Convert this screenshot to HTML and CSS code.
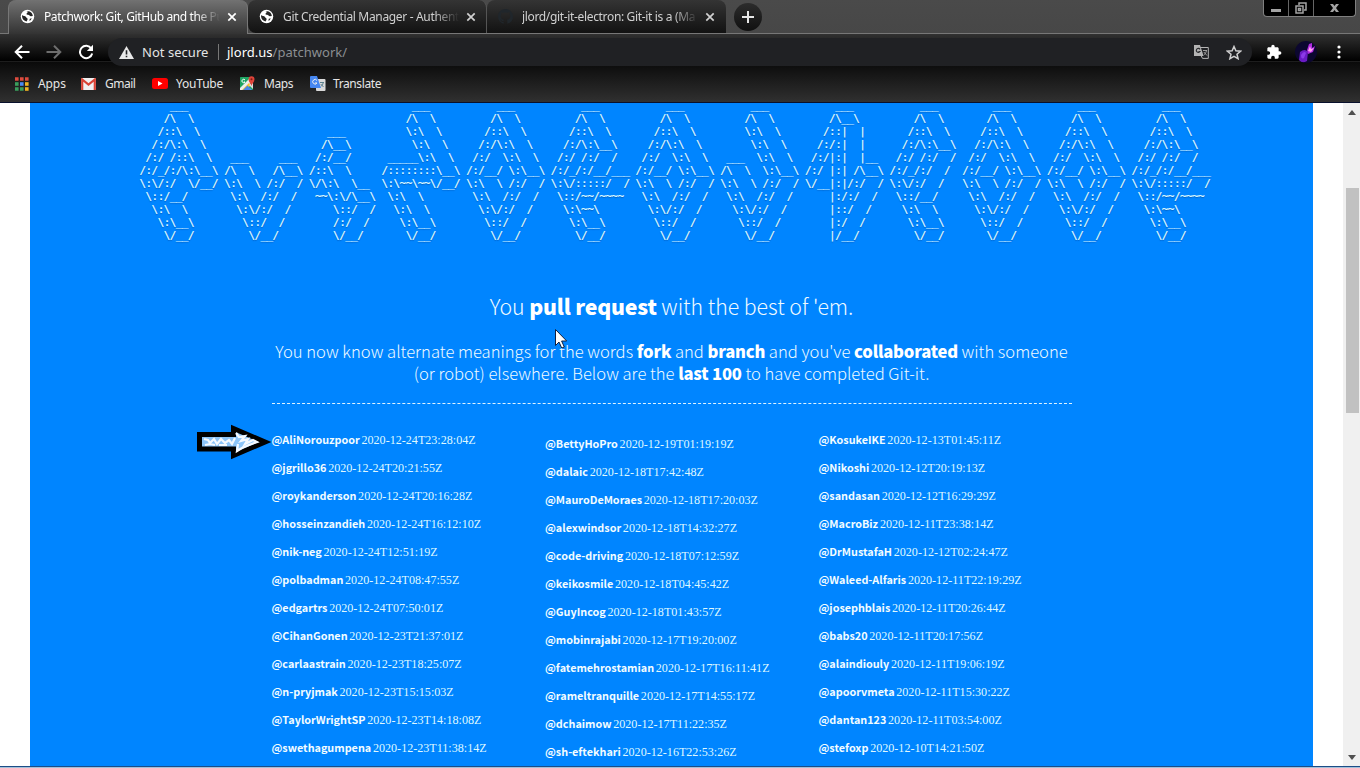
FILE: index.html
```
<!DOCTYPE html>
<html lang="en">
<head>
<meta charset="utf-8">
<title>Patchwork: Git, GitHub and the Pull Request</title>
<link rel="stylesheet" href="styles.css">
</head>
<body>
<svg width="0" height="0" class="defs">
  <symbol id="globe" viewBox="0 0 16 16"><circle cx="8" cy="8" r="7.2" fill="#fff"/><path d="M2.2 6.5C3.500 7.800 5.600 7.200 6.400 8.600 7 10 8.400 9.600 8.100 11.200L7 13.200C4.300 12.800 2.300 10.600 2.200 8zM6 2.700C7.800 2.300 8.600 3 7.700 4.200 6.400 4.800 6.700 6.300 8.400 6.100 10 6 10.400 7.600 11.600 7.800L13.700 7.400C13.500 5 11.900 2.800 9.600 2.300M10.500 10.300L12.600 9.800 11.300 11.900 9.900 12.600z" fill="#252525"/></symbol>
  <symbol id="close" viewBox="0 0 10 10"><path d="M1.300 1.300L8.700 8.700M8.700 1.300L1.300 8.700" stroke="currentColor" stroke-width="1.700"/></symbol>
</svg>
<header class="chrome">
  <div class="tabs">
    <div class="tab active"><svg class="fav"><use href="#globe"/></svg><span class="title t1">Patchwork: Git, GitHub and the Pu</span><svg class="x"><use href="#close"/></svg></div>
    <div class="tab second"><svg class="fav"><use href="#globe"/></svg><span class="title t2">Git Credential Manager - Authenti</span><svg class="x"><use href="#close"/></svg></div>
    <div class="tab third"><svg class="fav" viewBox="0 0 16 16"><path fill="#20262b" d="M8 0C3.580 0 0 3.580 0 8c0 3.540 2.290 6.530 5.470 7.590.4.070.55-.17.55-.38v-1.500c-2.230.5-2.700-.94-2.700-.94-.36-.92-.89-1.170-.89-1.170-.73-.5.05-.49.05-.49.8.06 1.230.83 1.230.83.7 1.220 1.870.87 2.330.66.07-.52.28-.87.5-1.070-1.780-.2-3.640-.89-3.640-3.950 0-.87.31-1.590.82-2.150-.1-.2-.36-1.020.08-2.120 0 0 .67-.21 2.200.82a7.600 7.600 0 0 1 4 0c1.530-1.040 2.200-.82 2.200-.82.44 1.100.16 1.920.08 2.120.51.56.82 1.270.82 2.150 0 3.070-1.870 3.750-3.650 3.950.29.25.54.73.54 1.480v2.200c0 .21.15.46.55.38A8 8 0 0 0 16 8c0-4.420-3.580-8-8-8z"/></svg><span class="title t3">jlord/git-it-electron: Git-it is a (Ma</span><svg class="x"><use href="#close"/></svg></div>
    <div class="newtab"><svg width="12" height="12" viewBox="0 0 12 12"><path d="M6 0V12M0 6H12" stroke="#e6e6e6" stroke-width="2"/></svg></div>
    <div class="winctl">
      <span class="wmin"><i></i></span>
      <span class="wmax"><svg width="12" height="12" viewBox="0 0 12 12"><path d="M4 3V1H11V8H9M1 4H8V11H1zM3.500 6.500H5.500V8.500H3.500z" fill="none" stroke="#a4a4a4" stroke-width="1.500"/></svg></span>
      <span class="wclose"><svg width="9" height="8" viewBox="0 0 9 8"><path d="M0 0H3L4.500 2 6 0H9L6 4 9 8H6L4.500 6 3 8H0L3 4z" fill="#a4a4a4"/></svg></span>
    </div>
  </div>
  <div class="toolbar">
    <svg class="nav" viewBox="0 0 16 16"><path d="M15.500 8H2M8 1.700L1.700 8 8 14.300" fill="none" stroke="#fff" stroke-width="2"/></svg>
    <svg class="nav" viewBox="0 0 16 16"><path d="M.5 8H14M8 1.700L14.300 8 8 14.300" fill="none" stroke="#6e6e6e" stroke-width="2"/></svg>
    <svg class="nav" viewBox="0 0 16 16"><path d="M13.300 4.500A6.200 6.200 0 1 0 14.200 9.500" fill="none" stroke="#fff" stroke-width="2"/><path d="M15 .8V7H8.800z" fill="#fff"/></svg>
    <div class="omni">
      <svg width="15" height="13" viewBox="0 0 15 13"><path d="M7.500 0L15 13H0z" fill="#e8e8e8"/><path d="M7.500 4.300V8.500M7.500 9.700V11.300" stroke="#202124" stroke-width="1.600"/></svg>
      <span class="ns">Not secure</span><i class="bar"></i><span class="url">jlord.us<b>/patchwork/</b></span>
      <svg class="gtr" width="15" height="14" viewBox="0 0 15 14"><path d="M6 2.500H14.300V13.400H8.500L7.300 11" fill="none" stroke="#b4b4b4"/><path d="M0 0H6L9.600 11H0z" fill="#b4b4b4"/><path d="M6 4.300A2 2 0 1 0 6 6.500H4.500" stroke="#2b2c2f" stroke-width="1.200" fill="none"/><path d="M9 5.500H13M12.500 5.500C12 8 11 9 9.800 10M9.800 7L13 10.500" stroke="#aaa" fill="none" stroke-width=".9"/></svg>
      <svg class="star" width="16" height="15" viewBox="0 0 16 15"><path d="M8 1.500L9.900 5.700 14.500 6.200 11 9.200 12.100 13.700 8 11.300 3.900 13.700 5 9.200 1.500 6.200 6.100 5.700z" fill="none" stroke="#d0d0d0" stroke-width="1.500"/></svg>
    </div>
    <svg class="puz" viewBox="0 0 24 24"><path fill="#fff" d="M20.500 11H19V7c0-1.100-.9-2-2-2h-4V3.500C13 2.120 11.880 1 10.500 1S8 2.120 8 3.500V5H4c-1.100 0-1.990.9-1.990 2v3.800H3.500c1.490 0 2.700 1.210 2.700 2.700s-1.210 2.700-2.700 2.700H2V20c0 1.100.9 2 2 2h3.800v-1.500c0-1.490 1.210-2.700 2.700-2.700s2.700 1.210 2.700 2.700V22H17c1.100 0 2-.9 2-2v-4h1.500c1.380 0 2.500-1.120 2.500-2.500S21.880 11 20.500 11z"/></svg>
    <svg class="ava" viewBox="0 0 22 22"><defs><clipPath id="ac"><circle cx="11" cy="11" r="11"/></clipPath></defs><g clip-path="url(#ac)"><rect width="22" height="22" fill="#0c0730"/><path d="M5 11Q10 7 13 11L12 20Q7 23 4 19z" fill="#6a1bc4"/><path d="M12 9L14 3 17 2 17 7 20 5 18 11 13 13z" fill="#b02be0"/><path d="M13 10L15 5 16 8 19 7 16 11z" fill="#ffa0f0"/><path d="M6 14Q9 9 11 12L9 17Q6 19 6 14" fill="#8b3ae8"/></g></svg>
    <svg class="dots" width="4" height="14" viewBox="0 0 4 14"><g fill="#fff"><circle cx="2" cy="2" r="1.600"/><circle cx="2" cy="7" r="1.600"/><circle cx="2" cy="12" r="1.600"/></g></svg>
  </div>
  <nav class="marks">
    <svg width="14" height="14" viewBox="0 0 14 14"><g stroke-width="3.600" stroke-dasharray="3.600 1.400"><path d="M0 2H14" stroke="#dd4b3e"/><path d="M0 7H3.600" stroke="#3a9e5c"/><path d="M5 7H8.600" stroke="#4a8af4"/><path d="M10 7H14" stroke="#f0b323"/><path d="M0 12H9" stroke="#3a9e5c"/><path d="M10 12H14" stroke="#f0b323"/></g></svg><span class="m1">Apps</span>
    <svg width="15" height="12" viewBox="0 0 15 12"><rect width="15" height="12" rx="1" fill="#f1f1f1"/><path d="M1.200 12V1.500L7.500 6.500 13.800 1.500V12" fill="none" stroke="#da4335" stroke-width="2.200"/></svg><span class="m2">Gmail</span>
    <svg width="16" height="11" viewBox="0 0 16 11"><rect width="16" height="11" rx="2.500" fill="#f00"/><path d="M6 3V8L10.500 5.500z" fill="#fff"/></svg><span class="m3">YouTube</span>
    <svg width="15" height="15" viewBox="0 0 15 15"><rect y="1" width="13" height="13" rx="1" fill="#1fa463"/><path d="M0 12L10 2 13 5 3 14H0z" fill="#eee"/><path d="M2 14L9 7 11 9 6 14z" fill="#fbc02d"/><path d="M9 9L13 13V6z" fill="#ddd"/><path d="M0 2V11L8 3 6 1H1z" fill="#1fa463"/><path d="M3 14L7.500 9.500 12 14z" fill="#4a86e8"/><path d="M11.500 10C11 7.500 8.500 6 8.500 3.200A3 3 0 0 1 14.500 3.200C14.500 6 12 7.500 11.500 10" fill="#e0443a"/><circle cx="11.500" cy="3.200" r="1" fill="#7c1c14"/><path d="M5 4A1.700 1.700 0 1 0 5 6H3.800" fill="none" stroke="#fff"/></svg><span class="m4">Maps</span>
    <svg width="16" height="15" viewBox="0 0 16 15"><rect x="6" y="3" width="9.500" height="12" rx="1" fill="#dadada"/><path d="M1 0H7L11 12H1Q0 12 0 11V1Q0 0 1 0" fill="#4687f1"/><path d="M7 4.500A2.300 2.300 0 1 0 7 7H5" fill="none" stroke="#eee"/><path d="M10 6.500H14M13.200 6.500C13 9 11.500 10 10.800 10.500M10.700 8L13.500 11" fill="none" stroke="#5a7f8c"/></svg><span class="m5">Translate</span>
  </nav>
</header>
<div class="view">
  <main class="panel">
    <div class="art">
<pre class="g">
     ___
    /\  \
   /::\  \
  /:/\:\  \
 /:/ /::\  \
/:/_/:/\:\__\
\:\/:/  \/__/
 \::/__/
  \:\  \
   \:\__\
    \/__/</pre>
<pre class="g">




 ___     ___
/\  \   /\__\
\:\  \ /:/  /
 \:\  /:/  /
  \:\/:/  /
   \::/  /
    \/__/</pre>
<pre class="g narrow">


   ___
  /\__\
 /:/__/
/::\  \
\/\:\  \__
 ~~\:\/\__\
    \::/  /
    /:/  /
    \/__/</pre>
<pre class="g">
     ___
    /\  \
    \:\  \
     \:\  \
 _____\:\  \
/::::::::\__\
\:\~~\~~\/__/
 \:\  \
  \:\  \
   \:\__\
    \/__/</pre>
<pre class="g">
     ___
    /\  \
   /::\  \
  /:/\:\  \
 /:/  \:\  \
/:/__/ \:\__\
\:\  \ /:/  /
 \:\  /:/  /
  \:\/:/  /
   \::/  /
    \/__/</pre>
<pre class="g">
     ___
    /\  \
   /::\  \
  /:/\:\__\
 /:/ /:/  /
/:/_/:/__/___
\:\/:::::/  /
 \::/~~/~~~~
  \:\~~\
   \:\__\
    \/__/</pre>
<pre class="g">
     ___
    /\  \
   /::\  \
  /:/\:\  \
 /:/  \:\  \
/:/__/ \:\__\
\:\  \ /:/  /
 \:\  /:/  /
  \:\/:/  /
   \::/  /
    \/__/</pre>
<pre class="g">
     ___
    /\  \
    \:\  \
     \:\  \
 ___  \:\  \
/\  \  \:\__\
\:\  \ /:/  /
 \:\  /:/  /
  \:\/:/  /
   \::/  /
    \/__/</pre>
<pre class="g">
     ___
    /\__\
   /::|  |
  /:/:|  |
 /:/|:|  |__
/:/ |:| /\__\
\/__|:|/:/  /
    |:/:/  /
    |::/  /
    |:/  /
    |/__/</pre>
<pre class="g narrow">
     ___
    /\  \
   /::\  \
  /:/\:\__\
 /:/ /:/  /
/:/_/:/  /
\:\/:/  /
 \::/__/
  \:\  \
   \:\__\
    \/__/</pre>
<pre class="g">
     ___
    /\  \
   /::\  \
  /:/\:\  \
 /:/  \:\  \
/:/__/ \:\__\
\:\  \ /:/  /
 \:\  /:/  /
  \:\/:/  /
   \::/  /
    \/__/</pre>
<pre class="g">
     ___
    /\  \
   /::\  \
  /:/\:\  \
 /:/  \:\  \
/:/__/ \:\__\
\:\  \ /:/  /
 \:\  /:/  /
  \:\/:/  /
   \::/  /
    \/__/</pre>
<pre class="g">
     ___
    /\  \
   /::\  \
  /:/\:\__\
 /:/ /:/  /
/:/_/:/__/___
\:\/:::::/  /
 \::/~~/~~~~
  \:\~~\
   \:\__\
    \/__/</pre>
    </div>
    <h1 class="lead">You <b>pull request</b> with the best of 'em.</h1>
    <p class="intro">You now know alternate meanings for the words <b>fork</b> and <b>branch</b> and you've <b>collaborated</b> with someone<br>(or robot) elsewhere. Below are the <b>last 100</b> to have completed Git-it.</p>
    <div class="people">
      <ul>
        <li><b>@AliNorouzpoor</b> 2020-12-24T23:28:04Z</li><li><b>@jgrillo36</b> 2020-12-24T20:21:55Z</li><li><b>@roykanderson</b> 2020-12-24T20:16:28Z</li><li><b>@hosseinzandieh</b> 2020-12-24T16:12:10Z</li><li><b>@nik-neg</b> 2020-12-24T12:51:19Z</li><li><b>@polbadman</b> 2020-12-24T08:47:55Z</li><li><b>@edgartrs</b> 2020-12-24T07:50:01Z</li><li><b>@CihanGonen</b> 2020-12-23T21:37:01Z</li><li><b>@carlaastrain</b> 2020-12-23T18:25:07Z</li><li><b>@n-pryjmak</b> 2020-12-23T15:15:03Z</li><li><b>@TaylorWrightSP</b> 2020-12-23T14:18:08Z</li><li><b>@swethagumpena</b> 2020-12-23T11:38:14Z</li>
      </ul>
      <ul class="mid">
        <li><b>@BettyHoPro</b> 2020-12-19T01:19:19Z</li><li><b>@dalaic</b> 2020-12-18T17:42:48Z</li><li><b>@MauroDeMoraes</b> 2020-12-18T17:20:03Z</li><li><b>@alexwindsor</b> 2020-12-18T14:32:27Z</li><li><b>@code-driving</b> 2020-12-18T07:12:59Z</li><li><b>@keikosmile</b> 2020-12-18T04:45:42Z</li><li><b>@GuyIncog</b> 2020-12-18T01:43:57Z</li><li><b>@mobinrajabi</b> 2020-12-17T19:20:00Z</li><li><b>@fatemehrostamian</b> 2020-12-17T16:11:41Z</li><li><b>@rameltranquille</b> 2020-12-17T14:55:17Z</li><li><b>@dchaimow</b> 2020-12-17T11:22:35Z</li><li><b>@sh-eftekhari</b> 2020-12-16T22:53:26Z</li>
      </ul>
      <ul>
        <li><b>@KosukeIKE</b> 2020-12-13T01:45:11Z</li><li><b>@Nikoshi</b> 2020-12-12T20:19:13Z</li><li><b>@sandasan</b> 2020-12-12T16:29:29Z</li><li><b>@MacroBiz</b> 2020-12-11T23:38:14Z</li><li><b>@DrMustafaH</b> 2020-12-12T02:24:47Z</li><li><b>@Waleed-Alfaris</b> 2020-12-11T22:19:29Z</li><li><b>@josephblais</b> 2020-12-11T20:26:44Z</li><li><b>@babs20</b> 2020-12-11T20:17:56Z</li><li><b>@alaindiouly</b> 2020-12-11T19:06:19Z</li><li><b>@apoorvmeta</b> 2020-12-11T15:30:22Z</li><li><b>@dantan123</b> 2020-12-11T03:54:00Z</li><li><b>@stefoxp</b> 2020-12-10T14:21:50Z</li>
      </ul>
    </div>
  </main>
  <div class="scroll"><svg width="8" height="5" viewBox="0 0 8 5"><path d="M0 5L4 0 8 5z" fill="#505050"/></svg><i class="thumb"></i><svg width="8" height="5" viewBox="0 0 8 5"><path d="M0 0H8L4 5z" fill="#505050"/></svg></div>
</div>
<footer class="edge"></footer>
<svg class="arrow" width="76" height="36" viewBox="0 0 76 36"><path d="M3.500 10.500H37.500V4.500L69 18 37.500 31.500V25H3.500z" fill="#8cc4f8" stroke="#000" stroke-width="5"/><path d="M8 15L12 16 14 19 18 15 21 20 25 15 29 19 33 16 36 20 39 14M9 21L14 20 19 21M23 21L31 21M40 9L43 13 49 12 45 17 52 15 49 20 57 16 61 18 53 21 46 24 41 27 42 20" fill="none" stroke="#f4f9ff" stroke-width="2.200"/></svg>
<svg class="pointer" width="13" height="20" viewBox="0 0 13 20"><path d="M.5.5V16.500L4 13 6.700 19 9.300 18 6.600 12H11.700z" fill="#fff" stroke="#102040"/></svg>
</body>
</html>
```
FILE: styles.css
```
* { box-sizing: border-box; }
body { margin: 0; width: 1360px; height: 768px; overflow: hidden; background: #fff; display: flex; flex-direction: column; font-family: "Noto Sans", sans-serif; }
svg { display: block; flex: none; }
i { display: block; }
.defs { position: absolute; }

.chrome { height: 103px; flex: none; background: linear-gradient(#313131 34px, #000 61px, #303030 61px, #0a0a0a 62px, #303030 102px, #08102c 102px); }
.tabs { height: 34px; display: flex; background: linear-gradient(#4a4a4a, #474747); border-bottom: 1px solid #777; padding-left: 8px; }
.tab { height: 33px; display: flex; align-items: center; padding-left: 11px; color: #d0d0d0; background: linear-gradient(#343434, #121212); font-size: 12px; border-radius: 8px 8px 0 0; }
.tab.active { width: 240px; height: 34px; background: linear-gradient(#727272, #333); border: 1px solid #777; border-top: 0; border-bottom: 0; color: #fff; padding-bottom: 1px; }
.second { width: 239px; border-radius: 8px 8px 0 8px; border-right: 1px solid #555; }
.third { width: 239px; padding-left: 11px; }
.fav { width: 15px; height: 15px; }
.title { margin-left: 9px; width: 176px; overflow: hidden; white-space: nowrap; -webkit-mask-image: linear-gradient(90deg, #000 86%, transparent); }
.t1 { letter-spacing: -.39px; }
.t2 { letter-spacing: -.33px; }
.t3 { letter-spacing: -.34px; }
.x { width: 10px; height: 10px; margin-left: 7px; }
.newtab { width: 28px; height: 28px; margin: 3px 0 0 8px; border-radius: 50%; background: linear-gradient(#2c2c2c, #101010); display: grid; place-items: center; }
.winctl { margin: 0 4px 0 auto; width: 93px; height: 17px; background: #000; border: 1px solid #808080; border-top: 0; border-radius: 0 0 4px 4px; display: flex; }
.winctl span { display: grid; place-items: center; border-right: 1px solid #666; width: 25px; }
.winctl .wclose { width: 41px; border: 0; }
.wmin i { width: 10px; height: 3px; background: #a4a4a4; margin-top: 5px; }

.toolbar { height: 36px; display: flex; align-items: center; padding-left: 14px; }
.nav { width: 16px; height: 16px; margin-right: 16px; }
.omni { width: 1144px; height: 28px; margin-left: -2px; border-radius: 14px; background: #202124; display: flex; align-items: center; padding-left: 11px; font-size: 13px; }
.ns { margin-left: 8px; color: #e4e4e4; width: 68px; white-space: nowrap; letter-spacing: .03px; }
.bar { width: 1px; height: 16px; background: #777; margin: 0 8px; }
.url { color: #fff; letter-spacing: .02px; }
.url b { font-weight: 400; color: #8b8e92; }
.gtr { margin-left: auto; }
.star { margin: 0 10px 0 17px; }
.puz { width: 16px; height: 16px; margin-left: 14px; }
.ava { width: 22px; height: 22px; margin-left: 13px; }
.dots { margin-left: 20px; }

.marks { height: 27px; display: flex; align-items: center; padding-left: 15px; font-size: 12px; color: #e6e6e6; letter-spacing: -.1px; }
.marks span { margin-left: 9px; }
.m1 { width: 43px; }
.m2 { width: 47px; letter-spacing: -.5px; }
.marks .m3 { width: 64px; margin-left: 8px; letter-spacing: -.2px; }
.m4 { width: 46px; letter-spacing: -.4px; }
.marks .m5 { margin-left: 7px; letter-spacing: -.4px; }

.view { height: 663px; flex: none; display: flex; overflow: hidden; }
.panel { margin: 0 30px; width: 1283px; background: #0085ff; color: #effaff; font-family: "Noto Sans CJK SC", sans-serif; display: flex; flex-direction: column; align-items: center; }
.art { display: flex; align-self: flex-start; margin: -4px 0 0 109.500px; height: 150px; flex: none; }
.g { margin: 0; width: 84.700px; flex: none; font: 11px/13px "DejaVu Sans Mono", monospace; letter-spacing: -.572px; color: #e4feff; -webkit-text-stroke: .15px #e4feff; text-shadow: 0 1px 1px rgba(0, 40, 100, .4); }
.narrow { width: 72.600px; }
.lead { margin: 39px 0 0; font-size: 21.300px; line-height: 36px; font-weight: 300; letter-spacing: -.03px; }
.lead b, .intro b { font-weight: 900; color: #fff; letter-spacing: -.2px; }
.intro { margin: 16px 0 0; width: 800px; height: 66px; border-bottom: 1px dashed #dff2ff; text-align: center; font-size: 16.600px; line-height: 22px; font-weight: 300; white-space: nowrap; }
.people { width: 800px; display: flex; padding-top: 22px; }
.people ul { margin: 0; padding: 0; list-style: none; width: 273.500px; flex: none; }
.people .mid { padding-top: 4px; }
.people li { height: 28px; line-height: 28px; font-family: "Liberation Serif", serif; font-size: 12.100px; white-space: nowrap; color: #dff8ff; word-spacing: -1.300px; }
.people b { font-family: "Noto Sans CJK SC", sans-serif; font-weight: 700; font-size: 10.800px; line-height: 20px; color: #f2fcff; }

.scroll { width: 17px; background: #f0f0f0; display: flex; flex-direction: column; align-items: center; padding: 7px 1px 6px 2px; }
.thumb { width: 13px; height: 225px; background: #c1c1c1; margin: 73px 0 auto; }
.edge { height: 2px; flex: none; background: linear-gradient(#1d4c86 50%, #a3c1da 50%); }
.arrow { position: absolute; left: 196px; top: 424px; }
.pointer { position: absolute; left: 555px; top: 329px; }
```
